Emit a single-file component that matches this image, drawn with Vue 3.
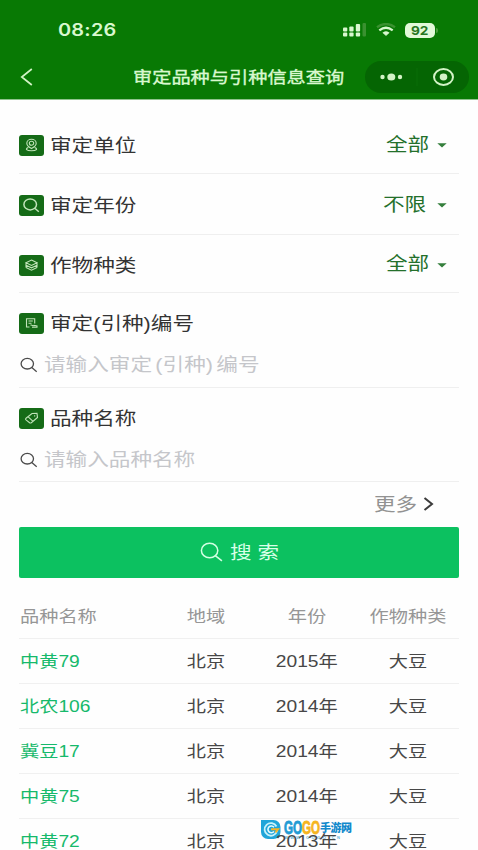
<script setup>
const selects = [
  { label: '审定单位', value: '全部', icon: 'pin', cls: 'r1' },
  { label: '审定年份', value: '不限', icon: 'search', cls: 'r2' },
  { label: '作物种类', value: '全部', icon: 'layers', cls: 'r3' },
]
const inputs = [
  { label: '审定(引种)编号', hint: '请输入审定 (引种) 编号', icon: 'doc', cls: 'f1' },
  { label: '品种名称', hint: '请输入品种名称', icon: 'tag', cls: 'f2' },
]
const rows = [
  ['中黄79', '北京', '2015年', '大豆'],
  ['北农106', '北京', '2014年', '大豆'],
  ['冀豆17', '北京', '2014年', '大豆'],
  ['中黄75', '北京', '2014年', '大豆'],
  ['中黄72', '北京', '2013年', '大豆'],
]
const icons = {
  pin: 'M12.5 13.5C10.3 12.3 7.800 10.700 7.800 8.200a4.700 4 0 0 1 9.400 0c0 2.500-2.500 4.100-4.700 5.300zM14.700 8.200a2.200 2 0 1 1-4.400 0a2.200 2 0 1 1 4.400 0M9.300 12.500c-3.500 1.400-2 3.200 3.200 3.200s6.700-1.800 3.200-3.200',
  search: 'M17.500 9.400a6.300 5.500 0 1 1-12.600 0a6.300 5.500 0 1 1 12.600 0M15.800 13.200l4 3.500',
  layers: 'M12.5 5l5.500 2.700-5.500 2.700L7 7.700zM7 10.200l5.500 2.600 5.500-2.600M7 12.600l5.500 2.600 5.500-2.600M7 7.700v4.900M18 7.700v4.900',
  doc: 'M10.500 14H7.500V5.700h8.200v4.800M9.500 8h4.300M9.500 10.200h3M11.500 12.200c1.600-.9 2.300 1.500 3.500.2l3 .6v1.300h-5',
  tag: 'M7 10.300l6-4.800 5-.1.500 4-6.200 5.300c-.7.5-1.200.4-1.700 0L7 11.900c-.6-.5-.6-1.100 0-1.600zM9.200 8.800l4.600 4.400M15.300 7.500l.8.800',
}
</script>

<template>
  <div class="page">
    <header class="top">
      <div class="status">
        <span class="time t">08:26</span>
        <svg class="signal" width="25" height="14" viewBox="0 0 25 14">
          <g fill="#d9f8cf">
            <rect x="1" y="4.500" width="4.300" height="4" rx="1" /><rect x="7.300" y="3.500" width="4.300" height="5" rx="1" /><rect x="13.800" y="1" width="4.300" height="7.500" rx="1" />
            <rect x="1" y="9.500" width="4.300" height="4" rx="1" /><rect x="7.300" y="9.500" width="4.300" height="4" rx="1" /><rect x="13.800" y="9.500" width="4.300" height="4" rx="1" />
          </g>
          <rect x="20.500" y="0" width="3.500" height="13.500" rx="1" fill="#3a9130" />
        </svg>
        <svg class="wifi" width="20" height="14" viewBox="0 0 20 14" fill="none" stroke-width="2.300">
          <path d="M1 4.200Q10-2.200 19 4.200" stroke="#3a9130" />
          <path d="M3.300 7.400Q10 2.200 16.700 7.400" stroke="#d9f8cf" />
          <path d="M6.800 9.700Q10 7.500 13.200 9.700L10 12.600z" fill="#d9f8cf" stroke="#d9f8cf" stroke-width=".6" />
        </svg>
        <div class="battery"><span class="t">92</span></div>
        <i class="cap"></i>
      </div>
      <div class="nav">
        <svg class="back" width="14" height="20" viewBox="0 0 14 20"><path d="M11.800 2L1.800 10l10 8" fill="none" stroke="#d3f3c6" stroke-width="1.700" /></svg>
        <h1 class="title t">审定品种与引种信息查询</h1>
        <svg class="capsule" width="104" height="32" viewBox="0 0 104 32">
          <rect width="104" height="32" rx="16" fill="#056503" />
          <path d="M52 7v18" stroke="#0b6e08" />
          <g fill="#d3f3c6"><circle cx="17.500" cy="16" r="2.200" /><ellipse cx="26.300" cy="16" rx="4" ry="3.600" /><circle cx="35" cy="16" r="2.200" /><ellipse cx="78.500" cy="16" rx="3.800" ry="3.400" /></g>
          <ellipse cx="78.500" cy="16" rx="9.500" ry="7.900" fill="none" stroke="#d3f3c6" stroke-width="2" />
        </svg>
      </div>
    </header>

    <main class="body">
      <div v-for="s in selects" :key="s.label" class="select" :class="s.cls">
        <svg class="badge" width="25" height="21" viewBox="0 0 25 21"><rect width="25" height="21" rx="3" fill="#156b17" /><path :d="icons[s.icon]" class="glyph" :class="s.icon" /></svg>
        <span class="label t">{{ s.label }}</span>
        <span class="value t">{{ s.value }}</span>
        <svg class="caret" width="10" height="5" viewBox="0 0 10 5"><path d="M.3 .3h9.400L5 4.600z" fill="#357f3d" /></svg>
      </div>

      <div v-for="f in inputs" :key="f.label" class="field" :class="f.cls">
        <div class="head">
          <svg class="badge" width="25" height="21" viewBox="0 0 25 21"><rect width="25" height="21" rx="3" fill="#156b17" /><path :d="icons[f.icon]" class="glyph" /></svg>
          <span class="label t">{{ f.label }}</span>
        </div>
        <div class="entry">
          <svg width="18" height="16" viewBox="0 0 18 16" fill="none" stroke="#4b4b4b" stroke-width="1.300"><ellipse cx="7.300" cy="6.700" rx="6.200" ry="5.300" /><path d="M11.800 10.400l4.900 4.300" /></svg>
          <span class="hint t">{{ f.hint }}</span>
        </div>
      </div>

      <div class="more">
        <span class="t">更多</span>
        <svg width="12" height="16" viewBox="0 0 12 16"><path d="M1.500 2l7.500 6-7.500 6" fill="none" stroke="#3b3b3b" stroke-width="2" /></svg>
      </div>

      <button class="submit">
        <svg width="24" height="20" viewBox="0 0 24 20" fill="none" stroke="#d2ffe3" stroke-width="1.500"><ellipse cx="9.600" cy="8.500" rx="8.200" ry="7.200" /><path d="M15.300 13.600l6.600 5.300" /></svg>
        <span class="t">搜 索</span>
      </button>

      <div class="table">
        <div class="row th">
          <span><b class="t">品种名称</b></span><span><b class="t">地域</b></span><span><b class="t">年份</b></span><span><b class="t">作物种类</b></span>
        </div>
        <div v-for="r in rows" :key="r[0]" class="row">
          <span v-for="(c, i) in r" :key="i"><b class="t">{{ c }}</b></span>
        </div>
      </div>
    </main>

    <div class="mark">
      <svg width="21" height="21" viewBox="0 0 21 21">
        <path d="M1 1h12.500a7 7 0 0 1 7 7v5a7 7 0 0 1-7 7H8a7 7 0 0 1-7-7z" fill="#20a5d9" />
        <path d="M16.500 7.500A6.300 6.300 0 1 0 17 12" fill="none" stroke="#c9f2fa" stroke-width="1.800" />
        <path d="M14 8.200A3.400 3.400 0 1 0 14 12.500" fill="none" stroke="#e4fbff" stroke-width="1.600" />
        <path d="M11 10.300h7l-2.500 3.200" fill="none" stroke="#f5b529" stroke-width="2" />
      </svg>
      <div class="brand">
        <div class="name"><span class="go">GO</span><span class="go gold">GO</span><span class="cn">手游网</span></div>
        <div class="site">W W W . G O G O . C N</div>
      </div>
    </div>
  </div>
</template>

<style>
body { background: #fefefe; overflow: hidden; }
</style>

<style scoped>
.page { position: relative; box-sizing: border-box; width: 478px; height: 850px; overflow: hidden; background: #fefefe; font-family: "Liberation Sans", "Noto Sans CJK SC", sans-serif; color: #333; }
.t { display: inline-block; white-space: pre; transform: scaleX(1.2); transform-origin: left center; font-weight: 400; }
.top { height: 100px; background: #087904; border-bottom: 1px solid #8fc38d; box-sizing: border-box; color: #d9f8cf; }
.status { display: flex; align-items: center; height: 55px; padding: 5px 0 0 58px; box-sizing: border-box; }
.time { width: 284px; font: 600 17px Inter, sans-serif; transform: scaleX(1.17); letter-spacing: .2px; }
.wifi { margin-left: 9px; }
.battery { display: flex; align-items: center; justify-content: center; margin-left: 9px; width: 30px; height: 15px; border-radius: 5px; background: #e2f9d9; color: #26761f; }
.battery .t { font: 700 12px Inter, sans-serif; transform-origin: center; transform: scaleX(1.14); }
.cap { width: 2px; height: 5px; margin-left: 1px; border-radius: 0 2px 2px 0; background: #489b3c; }
.nav { display: flex; align-items: center; height: 44px; }
.back { margin-left: 20px; }
.title { margin: 0 0 0 99px; padding-top: 1px; width: 232px; font-size: 16px; line-height: 24px; -webkit-text-stroke: .35px #d9f8cf; }
.capsule { flex: none; }
.body { position: relative; z-index: 1; padding: 0 19px; }
.select { display: flex; align-items: center; box-sizing: border-box; border-bottom: 1px solid #efefef; }
.r1 { height: 74px; padding-top: 18px; }
.r2 { height: 61px; padding-top: 3px; }
.r3 { height: 58px; padding-top: 3px; }
.badge { flex: none; }
.glyph { fill: none; stroke: #c1e4b9; stroke-width: 1.1; }
.glyph.search { stroke-width: 1.5; }
.label { margin-left: 6px; padding-top: 1px; font-size: 18px; line-height: 26px; }
.value { width: 50px; margin-left: auto; margin-right: 1px; padding-bottom: 2px; font-size: 18px; line-height: 26px; color: #24702b; }
.r2 .value { width: 53px; }
.caret { margin-right: 12px; }
.field { height: 95px; box-sizing: border-box; border-bottom: 1px solid #efefef; }
.f2 { height: 94px; }
.head { display: flex; align-items: center; padding-top: 17px; }
.entry { display: flex; align-items: center; margin-top: 15px; padding-left: 1px; }
.hint { margin-left: 6px; font-size: 18px; line-height: 26px; color: #c5c6ca; word-spacing: -2.2px; }
.more { display: flex; align-items: center; justify-content: flex-end; height: 45px; padding: 0 24px 2px 0; box-sizing: border-box; font-size: 18px; color: #929292; }
.more .t { width: 49px; padding-bottom: 1px; }
.submit { display: flex; align-items: center; width: 439.5px; height: 51px; padding: 0 0 2px 181px; border: 0; border-radius: 2px; background: #0cc160; color: #d9ffe7; font: 18px "Liberation Sans", "Noto Sans CJK SC", sans-serif; }
.submit .t { margin-left: 6px; padding-bottom: 1px; }
.table { margin-top: 16px; font-size: 16px; color: #474747; }
.row { display: grid; grid-template-columns: 136px 102px 100px 102px; align-items: center; height: 45px; padding-bottom: 3px; box-sizing: border-box; border-bottom: 1px solid #f0f0f0; }
.row.th { padding-bottom: 2px; }
.row span { display: flex; justify-content: center; }
.row span .t { transform-origin: center; }
.row span:first-child { justify-content: flex-start; padding-left: 1px; color: #16b96b; }
.row span:first-child .t { transform-origin: left; }
.row.th, .row.th span:first-child { color: #969696; }
.mark { position: absolute; left: 260px; top: 819px; display: flex; }
.brand { margin-left: 3px; }
.name { display: flex; height: 17px; align-items: center; white-space: nowrap; }
.go { width: 18px; font: 900 19px/17px "Liberation Sans", sans-serif; color: #229bd4; -webkit-text-stroke: .9px #229bd4; transform: scaleX(.61); transform-origin: left; }
.go.gold { color: #f6b51e; -webkit-text-stroke-color: #f6b51e; }
.cn { font: 900 11px/17px "Noto Sans CJK SC", sans-serif; color: #1289cc; letter-spacing: -.5px; }
.site { font: 700 4px/4px "Liberation Sans", sans-serif; color: #5eb2d8; letter-spacing: .65px; white-space: nowrap; }
</style>
